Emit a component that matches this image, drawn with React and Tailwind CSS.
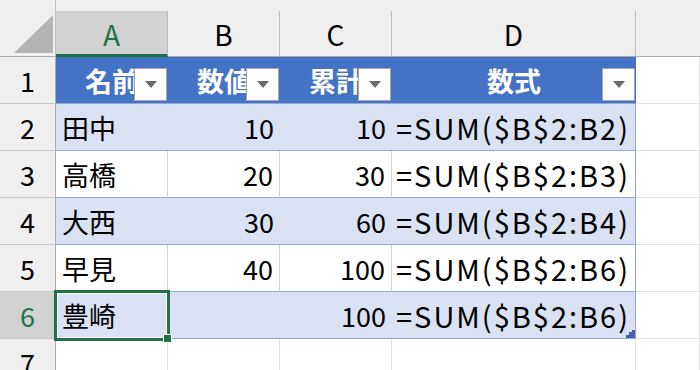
import React from 'react';

const COLS = ['A', 'B', 'C', 'D'];
const HEADERS = ['名前', '数値', '累計', '数式'];

const ROWS = [
  ['田中', '10', '10', '=SUM($B$2:B2)'],
  ['高橋', '20', '30', '=SUM($B$2:B3)'],
  ['大西', '30', '60', '=SUM($B$2:B4)'],
  ['早見', '40', '100', '=SUM($B$2:B6)'],
  ['豊崎', '', '100', '=SUM($B$2:B6)'],
];

const FONT = { fontFamily: '"Noto Sans CJK JP", "Noto Sans", sans-serif' };

const FilterButton = () => (
  <div className="absolute right-[1px] bottom-[2px] flex h-[33px] w-[33px] items-center justify-center border border-[#a6a6a6] bg-white">
    <svg width="12" height="7" viewBox="0 0 12 7">
      <path d="M0 0h12L6 7z" fill="#6b6b6b" />
    </svg>
  </div>
);

const RowHeader = ({ n, selected }) => (
  <div
    className={`flex items-center justify-center border-r border-b border-r-[#ababab] border-b-[#c8c8c8] text-[27px] leading-none ${
      selected ? 'bg-[#d2d2d2] text-[#217346]' : 'bg-[#efefef] text-black'
    }`}
  >
    {n}
  </div>
);

export default function App() {
  return (
    <div className="h-[370px] w-[700px] overflow-hidden bg-white" style={FONT}>
      <div className="grid grid-cols-[56px_112px_112px_112px_244px_64px] grid-rows-[57px_repeat(7,47px)]">
        {/* corner + column letters */}
        <div className="relative border-r border-b border-r-[#bdbdbd] border-b-[#ababab] bg-[#efefef]">
          <svg className="absolute left-[14px] top-[15px]" width="39" height="38" viewBox="0 0 39 38">
            <path d="M39 0V38H0z" fill="#b4b4b4" />
          </svg>
        </div>
        {COLS.map((c, i) => (
          <div key={c} className="flex flex-col bg-[#efefef]">
            <div
              className={`mt-[11px] flex flex-1 items-center justify-center border-r border-r-[#bdbdbd] text-[28px] leading-none ${
                i === 0 ? 'border-b-[3px] border-b-[#217346] bg-[#d2d2d2] pt-[3px] text-[#217346]' : 'border-b border-b-[#ababab] text-black'
              }`}
            >
              {c}
            </div>
          </div>
        ))}
        <div className="flex flex-col bg-[#efefef]">
          <div className="mt-[11px] flex-1 border-b border-b-[#ababab]" />
        </div>

        {/* row 1: table header */}
        <RowHeader n={1} />
        {HEADERS.map((h) => (
          <div
            key={h}
            className="relative flex items-center justify-center border-b border-b-[#8ea9db] bg-[#4472c4] text-[27px] font-bold leading-none text-white"
          >
            {h}
            <FilterButton />
          </div>
        ))}
        <div className="border-r border-b border-[#e1e1e1]" />

        {/* data rows */}
        {ROWS.map((r, ri) => {
          const band = ri % 2 === 0;
          const bg = band ? 'bg-[#d9e1f2]' : 'bg-white';
          const vline = band ? '' : 'border-r border-r-[#d4d4d4]';
          const last = ri === ROWS.length - 1;
          return (
            <React.Fragment key={ri}>
              <RowHeader n={ri + 2} selected={last} />
              <div className={`relative flex items-center border-b border-b-[#8ea9db] pl-[6px] text-[27px] leading-none text-black ${bg} ${vline}`}>
                {r[0]}
                {last && (
                  <div className="pointer-events-none absolute -left-[2px] -top-[2px] -right-[2px] -bottom-[3px] border-[3px] border-[#217346]">
                    <div className="h-full w-full border border-white" />
                    <div className="absolute -right-[5px] -bottom-[5px] h-[9px] w-[9px] border border-white bg-[#217346]" />
                  </div>
                )}
              </div>
              <div className={`flex items-center justify-end border-b border-b-[#8ea9db] pr-[6px] text-[27px] leading-none text-black ${bg} ${vline}`}>
                {r[1]}
              </div>
              <div className={`flex items-center justify-end border-b border-b-[#8ea9db] pr-[6px] text-[27px] leading-none text-black ${bg} ${vline}`}>
                {r[2]}
              </div>
              <div
                className={`relative flex items-center overflow-hidden whitespace-nowrap border-r border-b border-r-[#8ea9db] border-b-[#8ea9db] pl-[4px] text-[29px] leading-none tracking-[2px] text-black ${bg}`}
              >
                {r[3]}
                {last && (
                  <svg className="absolute right-0 bottom-0" width="9" height="8" viewBox="0 0 9 8">
                    <path d="M9 0V8H0V5H3V2H6V0z" fill="#4a5cb5" />
                  </svg>
                )}
              </div>
              <div className="border-r border-b border-[#e1e1e1]" />
            </React.Fragment>
          );
        })}

        {/* row 7 */}
        <RowHeader n={7} />
        {[0, 1, 2, 3, 4].map((i) => (
          <div key={i} className="border-r border-b border-[#e1e1e1]" />
        ))}
      </div>
    </div>
  );
}
